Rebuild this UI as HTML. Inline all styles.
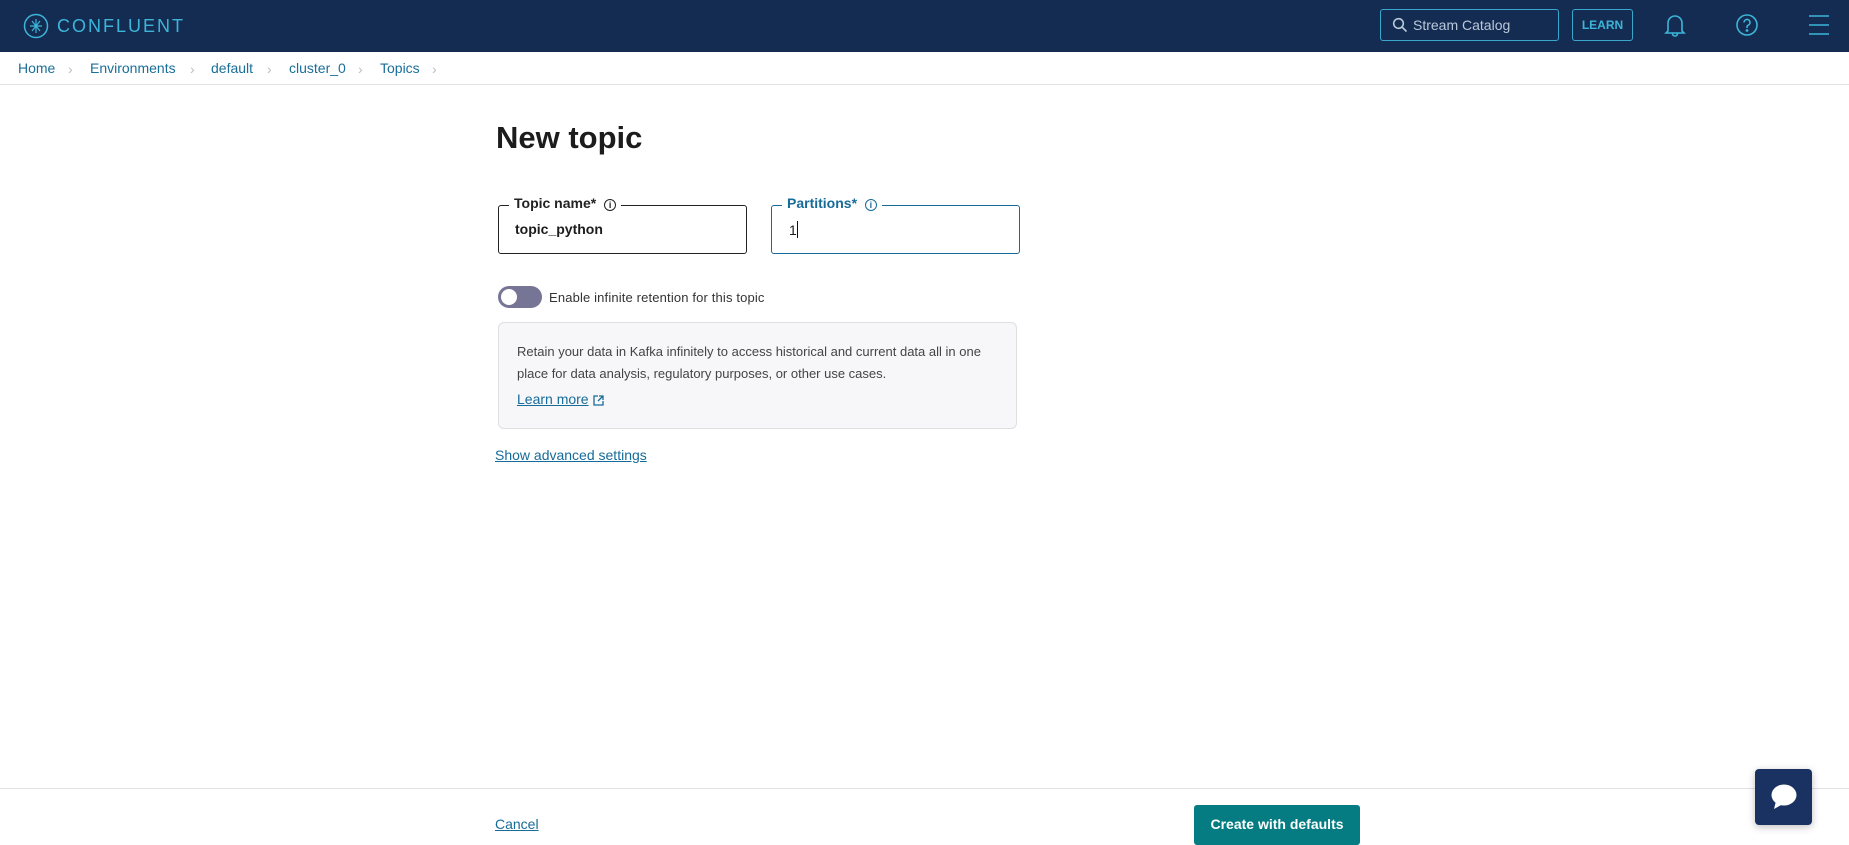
<!DOCTYPE html>
<html><head><meta charset="utf-8"><style>
*{box-sizing:border-box;margin:0;padding:0}
body{width:1849px;height:842px;overflow:hidden;background:#fff;font-family:"Liberation Sans",sans-serif;position:relative;color:#1c1c1c}
.hdr{position:absolute;left:0;top:0;width:1849px;height:52px;background:#152c52}
.abs{position:absolute}
.bc{position:absolute;top:60px;font-size:14px;color:#1a6e9a}
.chev{position:absolute;top:61px;color:#b8bec6;font-size:14px}
.lbl{position:absolute;background:#fff;padding:0 5px;font-size:14px;font-weight:bold;top:195px}
</style></head><body>
<div class="hdr">
 <svg class="abs" style="left:23px;top:13px" width="26" height="26" viewBox="0 0 26 26" fill="none" stroke="#3cb5d9" stroke-width="1.5"><circle cx="13" cy="13" r="11.5"/><path d="M13 6v14M7 13h12M9 8l8 10M9 18l8-10" stroke-width="1.2"/></svg>
 <div class="abs" style="left:57px;top:16px;color:#3cb5d9;font-size:18px;letter-spacing:2px">CONFLUENT</div>
 <div class="abs" style="left:1380px;top:9px;width:179px;height:32px;border:1px solid #3aa7cf;border-radius:3px"></div>
 <svg class="abs" style="left:1392px;top:17px" width="16" height="16" viewBox="0 0 16 16" fill="none" stroke="#b9c8da" stroke-width="1.6"><circle cx="6.5" cy="6.5" r="4.8"/><path d="M10 10l4.5 4.5"/></svg>
 <div class="abs" style="left:1413px;top:17px;color:#b9c8da;font-size:14px">Stream Catalog</div>
 <div class="abs" style="left:1572px;top:9px;width:61px;height:32px;border:1px solid #3aa7cf;border-radius:3px;color:#3cb5d9;font-size:12px;font-weight:bold;text-align:center;line-height:30px">LEARN</div>
 <svg class="abs" style="left:1663px;top:12px" width="24" height="26" viewBox="0 0 24 26" fill="none" stroke="#3cb5d9" stroke-width="1.6"><path d="M5 19V11a7 7 0 0 1 14 0v8l2 2H3z"/><path d="M9.5 21.5a2.5 2.5 0 0 0 5 0"/></svg>
 <svg class="abs" style="left:1735px;top:13px" width="24" height="24" viewBox="0 0 24 24" fill="none" stroke="#3cb5d9" stroke-width="1.6"><circle cx="12" cy="12" r="10"/><path d="M9 9.5a3 3 0 1 1 4 2.8c-.8.4-1 1-1 2v.7"/><circle cx="12" cy="17.5" r=".6" fill="#3cb5d9"/></svg>
 <svg class="abs" style="left:1809px;top:14px" width="20" height="22" viewBox="0 0 20 22" stroke="#3cb5d9" stroke-width="1.6"><path d="M0 2h20M0 11h20M0 20h20"/></svg>
</div>
<div class="bc" style="left:18px">Home</div><div class="chev" style="left:68px">›</div>
<div class="bc" style="left:90px">Environments</div><div class="chev" style="left:190px">›</div>
<div class="bc" style="left:211px">default</div><div class="chev" style="left:267px">›</div>
<div class="bc" style="left:289px">cluster_0</div><div class="chev" style="left:358px">›</div>
<div class="bc" style="left:380px">Topics</div><div class="chev" style="left:432px">›</div>
<div class="abs" style="left:0;top:84px;width:1849px;height:1px;background:#e1e1e6"></div>

<div class="abs" style="left:496px;top:120px;font-size:31px;font-weight:bold;color:#1c1c1c">New topic</div>

<div class="abs" style="left:498px;top:205px;width:249px;height:49px;border:1.5px solid #222;border-radius:3px"></div>
<div class="lbl" style="left:509px;top:195px;color:#222">Topic name* <span style="display:inline-block;width:12px;height:12px;border:1.3px solid #222;border-radius:50%;font-size:9px;text-align:center;line-height:10px;margin-left:4px">i</span></div>
<div class="abs" style="left:515px;top:221px;font-size:14px;font-weight:bold;color:#1c1c1c">topic_python</div>

<div class="abs" style="left:771px;top:205px;width:249px;height:49px;border:1.5px solid #176b99;border-radius:3px"></div>
<div class="lbl" style="left:782px;top:195px;color:#176b99">Partitions* <span style="display:inline-block;width:12px;height:12px;border:1.3px solid #176b99;border-radius:50%;font-size:9px;text-align:center;line-height:10px;margin-left:4px">i</span></div>
<div class="abs" style="left:789px;top:221px;font-size:14px;color:#1c1c1c">1<span style="display:inline-block;width:1px;height:17px;background:#111;vertical-align:-3px"></span></div>

<div class="abs" style="left:498px;top:286px;width:44px;height:22px;border-radius:11px;background:#767595"></div>
<div class="abs" style="left:501px;top:289px;width:16px;height:16px;border-radius:50%;background:#fff"></div>
<div class="abs" style="left:549px;top:290px;font-size:13px;color:#333;letter-spacing:.15px">Enable infinite retention for this topic</div>

<div class="abs" style="left:498px;top:322px;width:519px;height:107px;background:#f7f7f9;border:1px solid #dedee3;border-radius:6px"></div>
<div class="abs" style="left:517px;top:341px;width:490px;font-size:13px;line-height:22px;color:#444">Retain your data in Kafka infinitely to access historical and current data all in one place for data analysis, regulatory purposes, or other use cases.</div>
<div class="abs" style="left:517px;top:391px;font-size:14px;color:#176b99;text-decoration:underline">Learn more</div>
<svg class="abs" style="left:593px;top:395px" width="11" height="11" viewBox="0 0 11 11" fill="none" stroke="#176b99" stroke-width="1.3"><path d="M5 1H1v9h9V6M6 1h4v4M10 1L5 6"/></svg>
<div class="abs" style="left:495px;top:447px;font-size:14px;color:#176b99;text-decoration:underline">Show advanced settings</div>

<div class="abs" style="left:0;top:788px;width:1849px;height:1px;background:#e1e1e6"></div>
<div class="abs" style="left:495px;top:816px;font-size:14px;color:#176b99;text-decoration:underline">Cancel</div>
<div class="abs" style="left:1194px;top:805px;width:166px;height:40px;background:#047c82;border-radius:3px;color:#fff;font-size:14px;font-weight:bold;text-align:center;line-height:38px">Create with defaults</div>
<div class="abs" style="left:1755px;top:769px;width:57px;height:56px;background:#1a3262;border-radius:4px;box-shadow:0 2px 8px rgba(0,0,0,.25)"></div>
<svg class="abs" style="left:1768px;top:782px" width="32" height="30" viewBox="0 0 32 30"><ellipse cx="16" cy="13" rx="12.5" ry="10.5" fill="#fff"/><path d="M8 19l-2 8 9-5z" fill="#fff"/></svg>
</body></html>
